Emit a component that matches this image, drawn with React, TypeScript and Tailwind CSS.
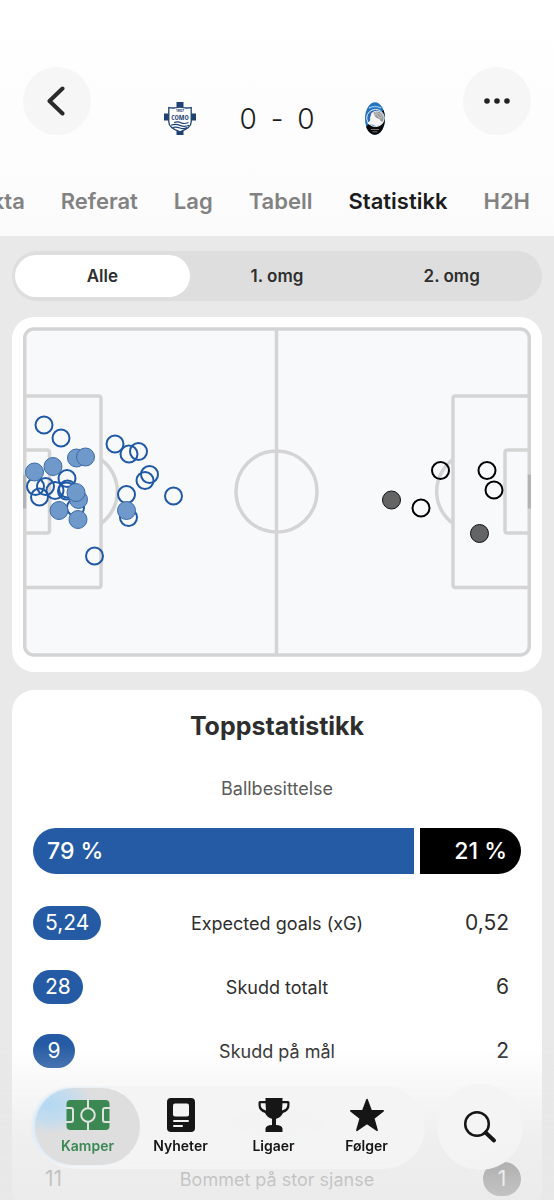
import React from "react";

type Shot = { x: number; y: number; onTarget?: boolean };

const homeShots: Shot[] = [
  { x: 21, y: 98 },
  { x: 38, y: 111 },
  { x: 92, y: 117 },
  { x: 106, y: 127 },
  { x: 115.5, y: 124.5 },
  { x: 126.5, y: 147.5 },
  { x: 122, y: 153.5 },
  { x: 150.5, y: 169 },
  { x: 103.5, y: 167.5 },
  { x: 105.5, y: 190.5 },
  { x: 71.5, y: 229 },
  { x: 44, y: 151.5 },
  { x: 12.5, y: 159.5 },
  { x: 22.5, y: 159.5 },
  { x: 16.5, y: 170 },
  { x: 32, y: 163.5 },
  { x: 43.5, y: 164 },
  { x: 44.5, y: 162 },
  { x: 52.5, y: 180.5 },
  { x: 53.5, y: 131, onTarget: true },
  { x: 62.5, y: 130, onTarget: true },
  { x: 30, y: 139.5, onTarget: true },
  { x: 11.5, y: 145, onTarget: true },
  { x: 55.5, y: 172.5, onTarget: true },
  { x: 53, y: 165.5, onTarget: true },
  { x: 36, y: 183.5, onTarget: true },
  { x: 55, y: 192.5, onTarget: true },
  { x: 103.5, y: 183.5, onTarget: true },
];

const awayShots: Shot[] = [
  { x: 417.5, y: 143.5 },
  { x: 464, y: 143.5 },
  { x: 471, y: 163 },
  { x: 398, y: 181 },
  { x: 368.5, y: 173, onTarget: true },
  { x: 456.5, y: 206.5, onTarget: true },
];

const tabs = ["Fakta", "Referat", "Lag", "Tabell", "Statistikk", "H2H"];
const periods = ["Alle", "1. omg", "2. omg"];

const rows = [
  { label: "Expected goals (xG)", home: "5,24", away: "0,52" },
  { label: "Skudd totalt", home: "28", away: "6" },
  { label: "Skudd på mål", home: "9", away: "2" },
];

function ComoCrest() {
  return (
    <svg viewBox="0 0 32 33" className="h-[33px] w-8" role="img" aria-label="Como">
      <path d="M12.5 0h7v33h-7zM0 11.5h32v7H0z" fill="#1f4273" />
      <path
        d="M4.800 5.600q5.800 1 11.200-.6 5.400 1.600 11.200.6V20q0 6-11.200 9.800Q4.800 26 4.800 20z"
        fill="#fff"
        stroke="#1f4273"
        strokeWidth="1.300"
      />
      <text x="16" y="10.200" textAnchor="middle" fontSize="3.500" fontWeight="700" fill="#1f4273" fontFamily="Inter, sans-serif">
        1907
      </text>
      <text x="16" y="17.800" textAnchor="middle" fontSize="7.200" fontWeight="800" fill="#1f4273" fontFamily="'Open Sans Condensed', Roboto, sans-serif">
        COMO
      </text>
      <g fill="none" stroke="#1f4273" strokeWidth="1.200">
        <path d="M10 20.500q4-1.500 7 .2t7.500-.2" />
        <path d="M7 23.300q4.500-1.800 9 .1t9-.2" />
        <path d="M8.500 25.500q4-1 7.500.5t7-.5" />
      </g>
    </svg>
  );
}

function AtalantaCrest() {
  return (
    <svg viewBox="0 0 32 33" className="h-[33px] w-8" role="img" aria-label="Atalanta">
      <ellipse cx="16" cy="16.500" rx="10" ry="16.200" fill="#2573bd" />
      <path d="M24.500 8Q26 12 26 16.500c0 9-4.500 16.200-10 16.200-4 0-7.300-3.200-9-8z" fill="#090909" />
      <path d="M10 6q6-3 12 0" fill="none" stroke="#8fc0ea" strokeWidth="1.400" />
      <ellipse cx="16.500" cy="16" rx="8.800" ry="8.600" fill="#2a6db0" stroke="#e6eef5" strokeWidth="1" />
      <path d="M12.500 11q5-4 10-.5 3.500 4 1.500 10-3 4-7.500 3.500-2-1.500-5-1.500-3 0-3-2 3.500-1 2.500-4.500z" fill="#f4f4f4" />
      <path d="M14.500 10.500q5-2.500 8.500 1.500 2.500 4 .5 8-2 0-3-3-5-1-6-6.500z" fill="#999" />
      <path d="M14 12q4 0 5 2t4 2M16 10.500q4 0 7 4" fill="none" stroke="#ddd" strokeWidth=".7" />
      <path d="M12 27.500h8M13.500 29.800h5" stroke="#777" strokeWidth="1" />
    </svg>
  );
}

function ShotDot({ shot, team }: { shot: Shot; team: "home" | "away" }) {
  const home = team === "home";
  if (shot.onTarget) {
    return (
      <circle cx={shot.x} cy={shot.y} r="9" fill={home ? "#6f99ca" : "#646464"} stroke={home ? "#3b6aa9" : "#111"} strokeWidth="1" />
    );
  }
  return <circle cx={shot.x} cy={shot.y} r="8.500" fill="none" stroke={home ? "#1f58a5" : "#000"} strokeWidth="2" />;
}

function ShotMap() {
  return (
    <section className="rounded-[22px] bg-white px-[11px] pt-[10px] pb-[15px]">
      <svg viewBox="0 0 508 330" className="block h-auto w-full" role="img" aria-label="Skuddkart">
        <g fill="none" stroke="#d4d4d4" strokeWidth="3.500">
          <rect x="1.750" y="2" width="504.500" height="326" rx="9" fill="#f8f9fb" />
          <path d="M253.500 2v326" />
          <circle cx="253.500" cy="164.500" r="40.500" />
          <path d="M2 69h73.500q2.500 0 2.500 2.500v186.500q0 2.500-2.500 2.500H2M2 123h22q2.500 0 2.500 2.500v78q0 2.500-2.500 2.500H2" />
          <path d="M78 132.500a39.500 39.500 0 0 1 0 64" />
          <path d="M506 69h-73.500q-2.500 0-2.500 2.500v186.500q0 2.500 2.500 2.500H506M506 123h-21.500q-2.500 0-2.500 2.500v78q0 2.500 2.500 2.500H506" />
          <path d="M430 132.500a39.500 39.500 0 0 0 0 64" />
        </g>
        <path d="M1.500 147.500v34M506.500 147.500v34" stroke="#b3b3b3" strokeWidth="3.500" />
        {homeShots.map((s, i) => (
          <ShotDot key={i} shot={s} team="home" />
        ))}
        {awayShots.map((s, i) => (
          <ShotDot key={i} shot={s} team="away" />
        ))}
      </svg>
    </section>
  );
}

function Badge({ children, tone }: { children: React.ReactNode; tone: "home" | "away" }) {
  return (
    <span
      className={
        tone === "home"
          ? "inline-flex h-[34px] min-w-[42px] items-center justify-center rounded-full bg-[#255ba4] px-3 text-white"
          : "inline-flex h-[34px] min-w-[38px] items-center justify-center rounded-full bg-black px-3 text-white"
      }
    >
      {children}
    </span>
  );
}

function StatsTable() {
  return (
    <table className="mt-[17px] w-full table-fixed text-[#2e2e2e]" aria-label="Toppstatistikk">
      <tbody>
        {rows.map((r) => (
          <tr key={r.label} className="h-16">
            <td className="w-1/5 text-left text-[21px]">
              <Badge tone="home">{r.home}</Badge>
            </td>
            <th scope="row" className="text-center text-[18px] font-normal">
              {r.label}
            </th>
            <td className="w-1/5 pr-3 text-right text-[21px]">{r.away}</td>
          </tr>
        ))}
        <tr className="h-16" aria-hidden="true">
          <td />
          <td>
            <div className="mx-auto h-3 w-28 rounded-full bg-gray-300 blur-sm" />
          </td>
          <td>
            <div className="mr-3 ml-auto h-3 w-3 rounded-full bg-gray-300 blur-sm" />
          </td>
        </tr>
        <tr className="h-16">
          <td className="pl-3 text-left text-[21px]">11</td>
          <th scope="row" className="text-center text-[18px] font-normal">
            Bommet på stor sjanse
          </th>
          <td className="text-right text-[21px]">
            <Badge tone="away">1</Badge>
          </td>
        </tr>
      </tbody>
    </table>
  );
}

function PitchIcon() {
  return (
    <svg viewBox="0 0 44 30" className="h-[30px] w-11">
      <rect x=".5" width="43" height="30" rx="4" fill="#3b8853" />
      <g fill="none" stroke="#dfe2df" strokeWidth="2">
        <path d="M22 0v8M22 22v8M0 8h5q2 0 2 2v10q0 2-2 2H0M44 8h-5q-2 0-2 2v10q0 2 2 2h5" />
        <circle cx="22" cy="15" r="6.800" />
      </g>
    </svg>
  );
}

function NewsIcon() {
  return (
    <svg viewBox="0 0 28 34" className="h-[34px] w-7">
      <rect width="28" height="34" rx="4" fill="#161616" />
      <rect x="6" y="5.500" width="16" height="13" rx="2" fill="#f3f3f3" />
      <path d="M7 23h14M7 28h8" stroke="#f3f3f3" strokeWidth="2" strokeLinecap="round" />
    </svg>
  );
}

function TrophyIcon() {
  return (
    <svg viewBox="0 0 32 34" className="h-[34px] w-8" fill="#161616">
      <path d="M7.500 0h17v3h5.500q1.500 0 1.500 1.500V7q0 6-6.500 8-2 4.500-7 5.800V27q6 .3 6.500 3.500V34h-17v-3.500q.5-3.200 6.500-3.500v-6.200q-5-1.300-7-5.800Q.5 13 .5 7V4.500Q.5 3 2 3h5.500z" />
      <path d="M7.500 5.200H2.700V7q0 4 5.300 5.500zM24.500 5.200h4.800V7q0 4-5.300 5.500z" fill="#f3f3f3" />
    </svg>
  );
}

function StarIcon() {
  return (
    <svg viewBox="0 0 36 34" className="h-[34px] w-9">
      <path
        d="M18 1.500l4.200 11.300h12L24.700 20.300l3.400 12L18 25.300l-10.100 7 3.400-12L1.800 12.800h12z"
        fill="#161616"
        stroke="#161616"
        strokeWidth="1.600"
        strokeLinejoin="round"
      />
    </svg>
  );
}

const navItems = [
  { label: "Kamper", Icon: PitchIcon, active: true },
  { label: "Nyheter", Icon: NewsIcon, active: false },
  { label: "Ligaer", Icon: TrophyIcon, active: false },
  { label: "Følger", Icon: StarIcon, active: false },
];

function BottomBar() {
  return (
    <div className="fixed inset-x-0 bottom-0 bg-linear-to-b from-[#e8e8e8]/0 via-[#e8e8e8]/70 via-60% to-[#e8e8e8]/85 pt-10 pr-[31px] pb-[30px] pl-[33px]">
      <div className="flex items-center justify-between">
        <nav className="flex h-[83px] w-[392px] rounded-full bg-[#f3f3f3]/95 pr-3 pl-2 backdrop-blur-md" aria-label="Hovedmeny">
          {navItems.map(({ label, Icon, active }) => (
            <a
              key={label}
              href={"#" + label.toLowerCase()}
              aria-current={active ? "page" : undefined}
              className={
                active
                  ? "relative flex flex-1 flex-col items-center pt-3 text-[#3b8853]"
                  : "relative flex flex-1 flex-col items-center pt-3 text-[#161616]"
              }
            >
              {active && (
                <span className="absolute inset-x-[-6px] top-0.5 bottom-1 rounded-full bg-[#dedede] bg-[radial-gradient(ellipse_at_14%_22%,#b4d8f2_0%,#c3dcee_18%,transparent_34%)] shadow-[-3px_0_3px_#dcebf8]" />
              )}
              <span className="relative flex h-[34px] items-center">
                <Icon />
              </span>
              <span className="relative mt-1 text-[14px] leading-5 font-semibold">{label}</span>
            </a>
          ))}
        </nav>
        <button type="button" aria-label="Søk" className="flex size-[86px] items-center justify-center rounded-full bg-[#f3f3f3]/95 backdrop-blur-md">
          <svg viewBox="0 0 34 34" className="size-[34px]" fill="none" stroke="#161616">
            <circle cx="14" cy="14" r="11.800" strokeWidth="2.500" />
            <path d="M22.500 22.500l8.500 8" strokeWidth="4" strokeLinecap="round" />
          </svg>
        </button>
      </div>
    </div>
  );
}

export default function App() {
  return (
    <div className="flex h-screen flex-col overflow-hidden bg-[#e9e9e9] font-[Inter,'Liberation_Sans',sans-serif] text-[#2e2e2e]">
      <header className="shrink-0 bg-linear-to-b from-white to-[#fbfbfb] pt-[67px]">
        <div className="flex items-start justify-between px-[23px]">
          <button type="button" aria-label="Tilbake" className="flex size-[68px] items-center justify-center rounded-full bg-[#f6f6f6]">
            <svg viewBox="0 0 20 30" className="h-[30px] w-5" fill="none" stroke="#2a2a2a" strokeWidth="4" strokeLinecap="round" strokeLinejoin="round">
              <path d="M15.500 2.500L2.500 15l13 12.500" />
            </svg>
          </button>
          <div className="mt-[17px] flex h-[68px] items-center gap-11">
            <ComoCrest />
            <h1 className="flex w-[75px] justify-between pt-0.5 text-[28px] font-light text-[#1c1c1c]">
              <span>0</span>
              <span>-</span>
              <span>0</span>
            </h1>
            <AtalantaCrest />
          </div>
          <button type="button" aria-label="Mer" className="flex size-[68px] items-center justify-center rounded-full bg-[#f6f6f6]">
            <svg viewBox="0 0 26 6" className="h-1.5 w-[26px]" fill="#222">
              <circle cx="3" cy="3" r="2.800" />
              <circle cx="13" cy="3" r="2.800" />
              <circle cx="23" cy="3" r="2.800" />
            </svg>
          </button>
        </div>
        <nav className="mt-[31px] flex justify-end gap-9 overflow-hidden pr-6 pb-[17px] text-[22px] leading-9 font-semibold" aria-label="Kampfaner">
          {tabs.map((t) => (
            <a
              key={t}
              href={"#" + t.toLowerCase()}
              aria-current={t === "Statistikk" ? "page" : undefined}
              className={t === "Statistikk" ? "text-[#1c1c1c]" : "text-[#828282]"}
            >
              {t}
            </a>
          ))}
        </nav>
      </header>

      <main className="flex-1 overflow-y-auto px-3 pt-[15px] [scrollbar-width:none]">
        <div className="flex h-[50px] rounded-full bg-[#dedede] px-[3px] py-1" role="group" aria-label="Periode">
          {periods.map((p, i) => (
            <button
              key={p}
              type="button"
              aria-pressed={i === 0}
              className={
                i === 0
                  ? "flex-1 rounded-full bg-white pt-0.5 text-[17px] font-semibold"
                  : "flex-1 rounded-full pt-0.5 text-[17px] font-semibold"
              }
            >
              {p}
            </button>
          ))}
        </div>

        <div className="mt-4">
          <ShotMap />
        </div>

        <section className="mt-[18px] rounded-[22px] bg-white px-[21px] pt-5">
          <h2 className="text-center text-[25px] leading-8 font-bold">Toppstatistikk</h2>
          <h3 className="mt-[35px] text-center text-[18px] leading-6 text-[#5a5a5a]">Ballbesittelse</h3>
          <div className="mt-[27px] flex h-[46px] gap-1.5 overflow-hidden rounded-full text-[23px] font-medium text-white">
            <div className="flex items-center bg-[#255ba4]" style={{ flex: "79 1 0%" }}>
              <span className="pl-[14px]">79 %</span>
            </div>
            <div className="flex items-center justify-end bg-black" style={{ flex: "21 1 0%" }}>
              <span className="pr-[14px]">21 %</span>
            </div>
          </div>
          <StatsTable />
        </section>
      </main>

      <BottomBar />
    </div>
  );
}
